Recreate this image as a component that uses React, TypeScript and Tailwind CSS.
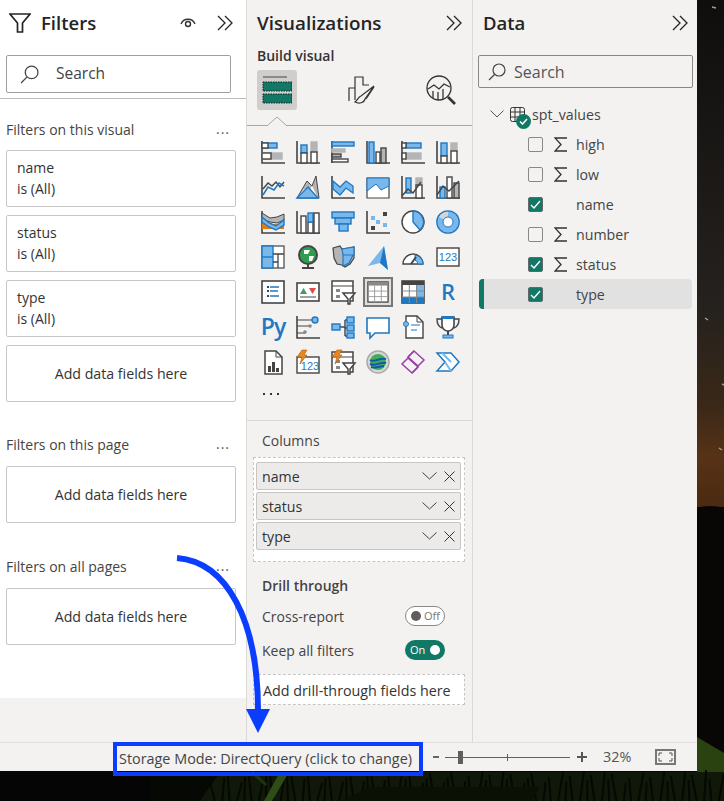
import type { ReactNode } from "react";

const D = "#444444";
const B = "#1f78c1";
const L = "#7ab8ec";
const G = "#b5b5b5";
const W = "#ffffff";
const P = "#9b3fa8";

type BoxProps = { x: number; y: number; w: number; h: number; f?: string; s?: string };

function Box({ x, y, w, h, f = W, s = D }: BoxProps) {
  return <rect x={x} y={y} width={w} height={h} fill={f} stroke={s} strokeWidth={1.4} />;
}

const axis = <path d="M1 1v22h23" fill="none" stroke={D} strokeWidth={1.6} />;

// the visual picker, left to right and top to bottom
const visuals: ReactNode[] = [
  <>{axis}<Box x={1} y={3} w={15} h={5} f={L} s={B} /><Box x={1} y={3} w={6} h={5} /><Box x={1} y={13} w={20} h={6} f={G} s={G} /><Box x={1} y={13} w={9} h={6} /></>,
  <>{axis}<Box x={5} y={5} w={6} h={8} f={L} s={B} /><Box x={5} y={13} w={6} h={10} /><Box x={15} y={2} w={6} h={10} f={G} s={G} /><Box x={15} y={12} w={6} h={11} /></>,
  <><path d="M1 1v22" stroke={D} strokeWidth={1.6} /><Box x={1} y={2} w={22} h={4} f={L} s={B} /><Box x={1} y={9} w={13} h={3} f={G} s={G} /><Box x={1} y={14} w={9} h={3} f={G} s={D} /><Box x={1} y={19} w={16} h={3} /></>,
  <>{axis}<Box x={3} y={2} w={5} h={21} f={L} s={B} /><Box x={10} y={12} w={4} h={11} /><Box x={15} y={8} w={5} h={15} f={G} s={D} /></>,
  <>{axis}<Box x={5} y={3} w={15} h={5} f={L} s={B} /><Box x={1} y={3} w={4} h={5} /><Box x={5} y={13} w={15} h={6} f={G} s={G} /><Box x={1} y={13} w={4} h={6} /></>,
  <>{axis}<Box x={5} y={3} w={6} h={13} f={L} s={B} /><Box x={5} y={16} w={6} h={7} /><Box x={15} y={3} w={6} h={8} f={G} s={G} /><Box x={15} y={11} w={6} h={12} /></>,
  <>{axis}<path d="M2 14l5-6 4 3 4-4 4 5 4-5" fill="none" stroke={D} strokeWidth={1.4} /><path d="M2 20l5-8 6 3 5-7 5 3" fill="none" stroke={B} strokeWidth={1.5} /></>,
  <><path d="M1 23L11 6l5 5 4-10 3 22z" fill={G} stroke={D} strokeWidth={1} /><path d="M1 23l7-9 5 3 3-6 6 12z" fill={W} /><path d="M1 23l11-11 10 11z" fill={L} stroke={B} strokeWidth={1.4} /></>,
  <>{axis}<path d="M2 6l7 6 6-6 7 5v7l-7-5-6 7-7-6z" fill={L} stroke={B} strokeWidth={1.3} /></>,
  <><path d="M1 3h22v20H1z" fill={W} stroke={D} strokeWidth={1.2} /><path d="M1 3h22v8l-8 4-5-6-9 7z" fill={L} stroke={B} strokeWidth={1} /></>,
  <>{axis}<Box x={5} y={3} w={5} h={15} f={L} s={B} /><Box x={15} y={3} w={6} h={7} f={G} s={G} /><Box x={15} y={10} w={6} h={13} /><path d="M1 21l6-7 5 4 8-11" fill="none" stroke={D} strokeWidth={1.4} /></>,
  <>{axis}<Box x={4} y={12} w={5} h={11} f={L} s={B} /><Box x={11} y={2} w={5} h={21} /><Box x={18} y={8} w={5} h={15} f={G} s={D} /><path d="M1 20l6-9 6 5 10-10" fill="none" stroke={D} strokeWidth={1.4} /></>,
  <>{axis}<path d="M1 3l8 5 7-1 7-3v6l-7 3-7-1-8-3z" fill={G} stroke={D} strokeWidth={1} /><path d="M1 14h22v5H1z" fill="#e07b1a" /><path d="M1 7l7 6 7 3 8-6v5l-8 5-7-3-7-5z" fill={L} stroke={B} strokeWidth={1.4} /></>,
  <>{axis}<Box x={5} y={6} w={5} h={17} /><Box x={12} y={12} w={5} h={11} f={W} /><Box x={12} y={3} w={5} h={9} f={L} s={B} /><Box x={18} y={3} w={5} h={20} f={W} /></>,
  <><Box x={1} y={2} w={22} h={6} f={L} s={B} /><Box x={4} y={8} w={16} h={6} f={L} s={B} /><Box x={8} y={14} w={9} h={7} f={L} s={B} /></>,
  <>{axis}<rect x={17} y={2} width={4} height={4} fill={D} /><rect x={5} y={6} width={4} height={4} fill={L} /><rect x={10} y={10} width={4} height={4} fill={L} /><rect x={17} y={13} width={4} height={4} fill={L} /><rect x={5} y={16} width={4} height={4} fill={D} /></>,
  <><circle cx={12} cy={12} r={11} fill={W} stroke={D} strokeWidth={1.4} /><path d="M12 12V1a11 11 0 0 1 7 19z" fill={L} stroke={B} strokeWidth={1.4} /></>,
  <><circle cx={12} cy={12} r={8} fill="none" stroke={L} strokeWidth={6} /><path d="M12 4a8 8 0 0 0-7 4" fill="none" stroke="#d5d5d5" strokeWidth={6} /><circle cx={12} cy={12} r={11.2} fill="none" stroke={B} strokeWidth={1.3} /><circle cx={12} cy={12} r={5} fill={W} stroke={B} strokeWidth={1} /></>,
  <><rect x={1} y={1} width={22} height={22} fill={W} stroke={D} strokeWidth={1.2} /><rect x={1} y={1} width={11} height={22} fill={L} stroke={B} strokeWidth={1.4} /><path d="M1 12h11" stroke={B} strokeWidth={1.4} /><path d="M12 9h11M17 9v14M12 17h5" stroke={D} strokeWidth={1.3} /></>,
  <><circle cx={12} cy={10} r={9} fill="#2f9e4f" stroke={D} strokeWidth={2} /><path d="M8 5h6l-2 4H8zM13 11h5l-2 5h-3z" fill={W} /><path d="M12 19v4M6 23h12" stroke={D} strokeWidth={2} /></>,
  <><path d="M2 3l7-2 2 3 6-1 6-1v11l-4 6-5 3-3-2-5-1-3-6z" fill={G} stroke={D} strokeWidth={1.2} /><path d="M11 4l6-1 6-1v8H12zM12 10h10l-4 8-6 3z" fill={L} stroke={B} strokeWidth={1.2} /></>,
  <><path d="M2 21L18 1l4 24-8-7z" fill={L} /><path d="M18 1l4 24-8-7z" fill={B} /></>,
  <><path d="M2 19a10 10 0 0 1 20 0z" fill={W} stroke={D} strokeWidth={1.4} /><path d="M14 10a9 9 0 0 1 8 9h-5a5 5 0 0 0-3-4z" fill={L} stroke={B} strokeWidth={1} /><path d="M10 19l5-7" stroke={D} strokeWidth={2} /></>,
  <><rect x={1} y={3} width={22} height={18} fill={W} stroke={D} strokeWidth={1.4} /><text x={12} y={16} textAnchor="middle" fontSize={11} fill={B} fontFamily="'Liberation Sans', sans-serif">123</text></>,
  <><rect x={1} y={1} width={22} height={22} fill={W} stroke={D} strokeWidth={1.6} /><rect x={6} y={6} width={2} height={2} fill={D} /><rect x={6} y={10} width={2} height={2} fill={D} /><rect x={6} y={15} width={2} height={2} fill={D} /><path d="M9 7h9M9 11h8M9 16h9" stroke={B} strokeWidth={1.6} /></>,
  <><rect x={1} y={3} width={22} height={18} fill={W} stroke={D} strokeWidth={1.6} /><path d="M4 14l3.500-6 3.500 6z" fill="#3f9e5f" /><path d="M13 8h7l-3.500 6z" fill="#e2494b" /><path d="M4 17h16" stroke={D} /></>,
  <><rect x={1} y={1} width={21} height={20} fill={W} stroke={D} strokeWidth={1.5} /><path d="M1 6h21" stroke={D} /><rect x={5} y={9} width={4} height={3} fill="#888" /><rect x={5} y={15} width={4} height={3} fill="#888" /><path d="M12 13h12l-5 6v5h-2v-5z" fill={W} stroke={D} strokeWidth={1.5} /></>,
  <><rect x={1} y={1} width={22} height={22} fill={W} stroke={D} strokeWidth={1.4} /><rect x={1} y={1} width={22} height={4} fill="#888" /><path d="M1 11h22M1 17h22M8.300 5v18M15.600 5v18" stroke="#999" /></>,
  <><rect x={1} y={1} width={22} height={22} fill={W} stroke={D} strokeWidth={1.6} /><rect x={1} y={1} width={22} height={4} fill={D} /><rect x={15} y={5} width={8} height={18} fill={L} /><rect x={1} y={17} width={22} height={6} fill={B} /><path d="M1 11h22M1 17h22M8.300 5v18M15.600 5v18" stroke="#888" /></>,
  <text x={12} y={20} textAnchor="middle" fontSize={22} fontWeight={600} fill={B} fontFamily="'Open Sans', sans-serif">R</text>,
  <text x={12} y={20} textAnchor="middle" fontSize={23} fontWeight={600} fill={B} fontFamily="'Open Sans', sans-serif" letterSpacing={-1}>Py</text>,
  <><path d="M1 1v22h23" fill="none" stroke={D} strokeWidth={1.6} /><path d="M1 5h16M1 11h12M1 18h8" stroke={D} strokeWidth={1.2} /><circle cx={19} cy={5} r={3} fill={L} stroke={B} strokeWidth={1.4} /><circle cx={14} cy={11} r={1.800} fill="#888" /><circle cx={9} cy={17} r={1.800} fill="#888" /></>,
  <><path d="M9 12h5M14 5v16M14 5h3M14 13h3M14 21h3" fill="none" stroke={D} strokeWidth={1.4} /><Box x={1} y={9} w={8} h={6} f={L} s={B} /><Box x={16} y={2} w={7} h={6} f={L} s={B} /><Box x={16} y={10} w={7} h={6} f={L} s={B} /><Box x={16} y={18} w={7} h={5} f={L} s={B} /></>,
  <path d="M1 3h22v15H9l-5 5v-5H1z" fill={W} stroke={B} strokeWidth={1.6} />,
  <><path d="M5 1h11l6 6v16H5z" fill={W} stroke={D} strokeWidth={1.4} /><path d="M16 1v6h6" fill="none" stroke={D} /><circle cx={5} cy={9} r={2.500} fill={L} stroke={B} /><path d="M10 10h9M10 15h6" stroke={B} strokeWidth={1.2} /></>,
  <><path d="M6 2h12v8a6 6 0 0 1-12 0z" fill={W} stroke={D} strokeWidth={1.6} /><rect x={6} y={1} width={12} height={3} fill={B} /><path d="M6 4H1c0 6 2 8 5 9M18 4h5c0 6-2 8-5 9" fill="none" stroke={D} strokeWidth={1.4} /><path d="M12 16v4" stroke={D} strokeWidth={2} /><rect x={7} y={20} width={10} height={3} fill={L} stroke={B} /></>,
  <><path d="M4 1h11l6 6v17H4z" fill={W} stroke={D} strokeWidth={1.5} /><path d="M15 1v6h6" fill="none" stroke={D} /><rect x={7} y={16} width={3} height={6} fill={D} /><rect x={11} y={12} width={3} height={10} fill={D} /><rect x={15} y={18} width={3} height={4} fill={D} /></>,
  <><rect x={1} y={7} width={22} height={16} fill={W} stroke={D} strokeWidth={1.4} /><text x={14} y={20} textAnchor="middle" fontSize={11} fill={B} fontFamily="'Liberation Sans', sans-serif">123</text><path d="M6 0h5L8 5h3l-7 9 2-7H1z" fill="#e8871e" stroke="#a85a10" strokeWidth={0.6} /></>,
  <><rect x={1} y={2} width={21} height={20} fill={W} stroke={D} strokeWidth={1.5} /><path d="M1 7h21" stroke={D} /><rect x={5} y={10} width={4} height={3} fill="#888" /><rect x={5} y={16} width={4} height={3} fill="#888" /><path d="M12 13h12l-5 6v5h-2v-5z" fill={W} stroke={D} strokeWidth={1.5} /><path d="M6 0h5L8 5h3l-7 9 2-7H1z" fill="#e8871e" stroke="#a85a10" strokeWidth={0.6} /></>,
  <><circle cx={12} cy={12} r={11} fill="#d8d8d8" stroke="#aaa" strokeWidth={1.5} /><circle cx={12} cy={12} r={8} fill="#3fae5a" /><path d="M4 10c5 3 10-3 16-1M4 14c6 3 11-3 16-1M5 17c5 2 9-1 13-1" fill="none" stroke="#1458a8" strokeWidth={2} /></>,
  <><path d="M13 1l10 9-6 6-10-9z" fill="none" stroke={P} strokeWidth={1.5} /><path d="M11 23L1 14l6-6 10 9z" fill="none" stroke={P} strokeWidth={1.5} /><path d="M7 7L13 1M17 17l-6 6" stroke={P} strokeWidth={1.5} /></>,
  <><path d="M1 3h14l8 9-8 9H1l8-9z" fill={W} stroke={B} strokeWidth={1.5} /><path d="M6 3l9 9M9 12l6 9" stroke={L} strokeWidth={2} /></>,
];

// dark blades of grass along the bottom of the wallpaper
const blades = Array.from({ length: 70 }, (_, i) => {
  const x = 215 + i * 7.300;
  const lean = (i * 7) % 11 - 5;
  return `M${x} 801l${lean} -${18 + (i * 5) % 14}`;
});

function FilterCard({ name }: { name: string }) {
  return (
    <div className="ml-[6px] mr-[10px] h-[57px] rounded-[2px] border border-[#c8c6c4] bg-white px-[10px] pt-[6px] text-[14px] leading-[21px] text-[#333]">
      <div>{name}</div>
      <div>is (All)</div>
    </div>
  );
}

function EmptyCard() {
  return (
    <div className="ml-[6px] mr-[10px] flex h-[57px] items-center justify-center rounded-[2px] border border-[#c8c6c4] bg-white text-[14.200px] text-[#333]">
      Add data fields here
    </div>
  );
}

function SectionLabel({ title, className }: { title: string; className: string }) {
  return (
    <div className={`flex items-center justify-between pl-[6px] pr-[16px] text-[14px] text-[#444] ${className}`}>
      <span>{title}</span>
      <span className="relative -top-[1px] tracking-[1px] text-[#555]">...</span>
    </div>
  );
}

function Chevrons({ className }: { className?: string }) {
  return (
    <svg viewBox="0 0 16 16" className={`h-[16px] w-[16px] ${className ?? ""}`} fill="none" stroke="#252423" strokeWidth={1.300}>
      <path d="M1 1l7 7-7 7M8 1l7 7-7 7" />
    </svg>
  );
}

function SearchIcon({ className }: { className?: string }) {
  return (
    <svg viewBox="0 0 18 18" className={className} fill="none" stroke="#444" strokeWidth={1.200}>
      <circle cx={11} cy={7} r={6} />
      <path d="M6.500 11.500L1 17" />
    </svg>
  );
}

function Well({ name }: { name: string }) {
  return (
    <div className="flex h-[28px] items-center rounded-[2px] border border-[#c8c6c4] bg-[#edebe9] pl-[5px] pr-[5px] text-[14.200px] text-[#333]">
      <span className="flex-1 pt-[2px]">{name}</span>
      <svg viewBox="0 0 15 8" className="mr-[7px] h-[8px] w-[15px]" fill="none" stroke="#444" strokeWidth={1}>
        <path d="M0.500 0.500L7.500 7l7-6.500" />
      </svg>
      <svg viewBox="0 0 11 11" className="h-[11px] w-[11px]" fill="none" stroke="#333" strokeWidth={1}>
        <path d="M0.500 0.500l10 10M10.500 0.500l-10 10" />
      </svg>
    </div>
  );
}

function Toggle({ on }: { on: boolean }) {
  if (on) {
    return (
      <div className="flex h-[20px] w-[40px] items-center rounded-full bg-[#117865] pl-[5px] text-[11px] text-white">
        <span className="flex-1">On</span>
        <span className="mr-[5px] h-[10px] w-[10px] rounded-full bg-white" />
      </div>
    );
  }
  return (
    <div className="flex h-[20px] w-[40px] items-center rounded-full border border-[#8a8886] bg-white pl-[5px] text-[11px] text-[#777]">
      <span className="mr-[3px] h-[10px] w-[10px] rounded-full bg-[#605e5c]" />
      <span>Off</span>
    </div>
  );
}

function Checkbox({ checked }: { checked: boolean }) {
  if (!checked) return <span className="h-[15px] w-[15px] rounded-[2px] border border-[#8a8886] bg-[#f3f2f1]" />;
  return (
    <span className="flex h-[15px] w-[15px] items-center justify-center rounded-[2px] border border-[#666] bg-[#117865]">
      <svg viewBox="0 0 11 9" className="h-[9px] w-[11px]" fill="none" stroke="#fff" strokeWidth={1.400}>
        <path d="M1 5l3 3 6-7" />
      </svg>
    </span>
  );
}

function Field({ name, checked, sigma, active }: { name: string; checked: boolean; sigma: boolean; active?: boolean }) {
  return (
    <div className={`relative flex h-[30px] items-center rounded-[4px] pl-[49px] text-[14.200px] text-[#444] ${active ? "bg-[#e1e1e1]" : ""}`}>
      {active && <span className="absolute bottom-0 left-0 top-0 w-[5px] rounded-l-[4px] bg-[#117865]" />}
      <Checkbox checked={checked} />
      <span className="flex w-[33px] justify-center pl-[1px]">
        {sigma && (
          <svg viewBox="0 0 13 15" className="h-[15px] w-[13px]" fill="none" stroke="#333" strokeWidth={1.300}>
            <path d="M13 1H1l6 6.500L1 14h12" />
          </svg>
        )}
      </span>
      <span className="pt-[2px]">{name}</span>
    </div>
  );
}

export default function App() {
  return (
    <div className="relative h-[801px] w-[724px] overflow-hidden bg-[#050505] font-['Open_Sans','Noto_Sans',sans-serif]">
      {/* desktop wallpaper behind the window */}
      <svg viewBox="0 0 724 801" className="absolute inset-0 h-[801px] w-[724px]">
        <defs>
          <linearGradient id="sky" x1="0" y1="0" x2="0" y2="1">
            <stop offset="0" stopColor="#100e0d" />
            <stop offset="0.6" stopColor="#24211e" />
            <stop offset="0.8" stopColor="#3a2818" />
            <stop offset="0.9" stopColor="#573216" />
            <stop offset="1" stopColor="#4a2a12" />
          </linearGradient>
        </defs>
        <rect x={690} y={0} width={34} height={507} fill="url(#sky)" />
        <path d="M690 510c12-5 24-5 34-2v270h-34z" fill="#090706" />
        <path d="M697 737l27 16v25h-27z" fill="#2a420f" />
        <path d="M712 7l4 1M705 318l3 2M722 384l2 1M719 448l3 2" stroke="#a09c94" strokeWidth={1.500} />
        <path d="M200 801V772h524v29z" fill="#10180a" />
        <path d="M150 801V772h70l-20 29z" fill="#060803" />
        <path d={blades.join("")} stroke="#060803" strokeWidth={2} />
        <path d="M340 801l30-14h170l-8 14z" fill="#0b1005" />
        <path d="M280 772h9l-17 29h-8z" fill="#2f4d17" />
        <path d="M252 772l14 13" stroke="#1f3310" strokeWidth={3} />
      </svg>

      <div className="relative flex h-[771px] w-[697px] flex-col bg-[#f3f2f1]">
        <div className="flex h-[742px]">
          {/* Filters */}
          <div className="flex w-[247px] flex-col border-r border-[#dcdad8]">
            <div className="h-[698px] bg-white">
              <div className="flex h-[46px] items-center pl-[9px] pr-[13px]">
                <svg viewBox="0 0 22 22" className="mr-[10px] h-[22px] w-[22px]" fill="none" stroke="#252423" strokeWidth={1.700}>
                  <path d="M1 2h20l-7.500 9v9h-5v-9z" />
                </svg>
                <span className="flex-1 text-[18.500px] font-semibold text-[#252423]">Filters</span>
                <svg viewBox="0 0 16 12" className="mr-[21px] h-[12px] w-[16px]" fill="none" stroke="#333" strokeWidth={1.400}>
                  <path d="M1 7a7.500 7.500 0 0 1 14 0" />
                  <circle cx={8} cy={7} r={2.500} />
                </svg>
                <Chevrons />
              </div>
              <div className="ml-[6px] mr-[15px] mt-[9px] flex h-[38px] items-center rounded-[2px] border border-[#a19f9d] pl-[13px] text-[15.500px] text-[#444]">
                <SearchIcon className="mr-[17px] h-[19px] w-[19px]" />
                Search
              </div>
              <div className="mt-[5px] h-px bg-[#bdbbb9]" />
              <SectionLabel title="Filters on this visual" className="mb-[10px] mt-[20px] h-[21px]" />
              <div className="flex flex-col gap-[8px]">
                <FilterCard name="name" />
                <FilterCard name="status" />
                <FilterCard name="type" />
                <EmptyCard />
              </div>
              <SectionLabel title="Filters on this page" className="mb-[11px] mt-[32px] h-[21px]" />
              <EmptyCard />
              <SectionLabel title="Filters on all pages" className="mb-[11px] mt-[33px] h-[21px]" />
              <EmptyCard />
            </div>
          </div>

          {/* Visualizations */}
          <div className="flex w-[226px] flex-col border-r border-[#dcdad8]">
            <div className="flex h-[46px] items-center pl-[10px] pr-[10px]">
              <span className="flex-1 text-[18.800px] font-semibold text-[#252423]">Visualizations</span>
              <Chevrons />
            </div>
            <div className="pl-[10px] text-[14px] font-semibold leading-[20px] text-[#333]">Build visual</div>
            <div className="mt-[4px] flex items-center pl-[10px]">
              <div className="flex h-[40px] w-[40px] flex-col items-center justify-center rounded-[3px] bg-[#cfcecd]">
                <svg viewBox="0 0 30 30" className="h-[30px] w-[30px]">
                  <path d="M1 2h24" stroke="#444" strokeWidth={1} />
                  <rect x={1} y={7} width={29} height={9} fill="#117865" stroke="#222" strokeWidth={1} strokeDasharray="1.500 1" />
                  <rect x={1} y={19} width={29} height={9} fill="#117865" stroke="#222" strokeWidth={1} strokeDasharray="1.500 1" />
                </svg>
              </div>
              <svg viewBox="0 0 28 30" className="ml-[51px] h-[30px] w-[28px]" fill="none" stroke="#333" strokeWidth={1.200}>
                <path d="M1 26V13h6V2h8v8h6M7 13v12" />
                <path d="M26 11L13 21c-3 1-3 4-6 6 4 2 9 1 10-3z" />
                <path d="M26 12l-8 12" />
              </svg>
              <svg viewBox="0 0 32 32" className="ml-[49px] h-[32px] w-[32px]" fill="none" stroke="#333" strokeWidth={1.300}>
                <circle cx={14} cy={14} r={12} />
                <path d="M3 15l6-4 5 4 5-5 6 3M8 17v7M13 18v8M18 15v10" />
                <path d="M23 23l7 7" strokeWidth={2.600} />
              </svg>
            </div>
            <div className="relative mt-[15px] h-px bg-[#a6a6a6]">
              <svg viewBox="0 0 22 10" className="absolute left-[19px] top-[-9px] h-[10px] w-[22px]" fill="#f3f2f1" stroke="#a6a6a6">
                <path d="M1 10l10-9 10 9" />
              </svg>
            </div>
            <div className="ml-[8px] mt-[8px] grid w-[210px] grid-cols-6 self-start">
              {visuals.map((icon, i) => (
                <div key={i} className="flex h-[35px] w-[35px] items-center justify-center">
                  <div className={i === 27 ? "flex h-[30px] w-[30px] items-center justify-center border-2 border-[#777] bg-[#e1dfdd]" : ""}>
                    <svg viewBox="0 0 24 24" className={i === 27 ? "h-[22px] w-[22px]" : "h-[24px] w-[24px] overflow-visible"}>{icon}</svg>
                  </div>
                </div>
              ))}
            </div>
            <div className="ml-[16px] flex h-[31px] items-start gap-[5px] pt-[14px]">
              <span className="h-[2px] w-[2px] bg-[#333]" />
              <span className="h-[2px] w-[2px] bg-[#333]" />
              <span className="h-[2px] w-[2px] bg-[#333]" />
            </div>
            <div className="mt-[10px] h-px bg-[#d9d7d5]" />
            <div className="mt-[10px] pl-[15px] text-[14px] leading-[20px] text-[#444]">Columns</div>
            <div className="ml-[6px] mr-[7px] mt-[6px] flex h-[105px] flex-col gap-[2px] border border-dashed border-[#c8c6c4] bg-white pl-[2px] pr-[3px] pt-[4px]">
              <Well name="name" />
              <Well name="status" />
              <Well name="type" />
            </div>
            <div className="mt-[14px] pl-[15px] text-[14px] font-semibold leading-[20px] text-[#444]">Drill through</div>
            <div className="mt-[10px] flex h-[20px] items-center pl-[15px] pr-[27px] text-[14px] text-[#444]">
              <span className="flex-1">Cross-report</span>
              <Toggle on={false} />
            </div>
            <div className="mt-[14px] flex h-[20px] items-center pl-[15px] pr-[27px] text-[14px] text-[#444]">
              <span className="flex-1">Keep all filters</span>
              <Toggle on />
            </div>
            <div className="ml-[6px] mr-[7px] mt-[14px] flex h-[31px] items-center border border-dashed border-[#c8c6c4] bg-white pl-[9px] pt-[2px] text-[14.300px] text-[#333]">
              Add drill-through fields here
            </div>
          </div>

          {/* Data */}
          <div className="flex w-[224px] flex-col">
            <div className="flex h-[46px] items-center pl-[10px] pr-[9px]">
              <span className="flex-1 text-[18.500px] font-semibold text-[#252423]">Data</span>
              <Chevrons />
            </div>
            <div className="ml-[5px] mr-[4px] mt-[9px] flex h-[33px] items-center rounded-[2px] border border-[#8a8886] pl-[9px] pt-[1px] text-[16px] text-[#555]">
              <SearchIcon className="mr-[8px] h-[18px] w-[18px]" />
              Search
            </div>
            <div className="ml-[6px] mr-[5px] mt-[11px]">
              <div className="flex h-[30px] items-center pl-[11px] text-[14.200px] text-[#444]">
                <svg viewBox="0 0 14 8" className="mr-[6px] h-[8px] w-[14px]" fill="none" stroke="#555" strokeWidth={1}>
                  <path d="M0.500 0.500L7 7l6.500-6.500" />
                </svg>
                <span className="relative mr-[7px] h-[15px] w-[15px]">
                  <svg viewBox="0 0 15 15" className="h-[15px] w-[15px]" fill="none" stroke="#333" strokeWidth={1}>
                    <rect x={0.500} y={0.500} width={14} height={14} rx={2} />
                    <path d="M5 0.500v14M10 0.500v14M0.500 5h14M0.500 10h14" />
                  </svg>
                  <span className="absolute left-[6px] top-[7px] flex h-[15px] w-[15px] items-center justify-center rounded-full bg-[#117865]">
                    <svg viewBox="0 0 9 7" className="h-[7px] w-[9px]" fill="none" stroke="#fff" strokeWidth={1.500}>
                      <path d="M1 3.500L3.500 6 8 1" />
                    </svg>
                  </span>
                </span>
                <span className="pt-[2px]">spt_values</span>
              </div>
              <Field name="high" checked={false} sigma />
              <Field name="low" checked={false} sigma />
              <Field name="name" checked sigma={false} />
              <Field name="number" checked={false} sigma />
              <Field name="status" checked sigma />
              <Field name="type" checked sigma={false} active />
            </div>
          </div>
        </div>

        {/* status bar */}
        <div className="flex h-[29px] items-center border-t border-[#e1dfdd] text-[14.400px] text-[#555]">
          <span className="ml-[119px] w-[310px] whitespace-nowrap pt-[3px] text-[#444]">Storage Mode: DirectQuery (click to change)</span>
          <span className="ml-[4px] h-[2px] w-[6px] bg-[#666]" />
          <span className="relative ml-[6px] h-px w-[125px] bg-[#605e5c]">
            <span className="absolute left-[13px] top-[-6px] h-[13px] w-[5px] bg-[#605e5c]" />
            <span className="absolute left-[62px] top-[-3px] h-[7px] w-px bg-[#605e5c]" />
          </span>
          <svg viewBox="0 0 10 10" className="ml-[7px] h-[10px] w-[10px]" stroke="#555" strokeWidth={2}>
            <path d="M0 5h10M5 0v10" />
          </svg>
          <span className="ml-[16px] w-[30px] whitespace-nowrap">32%</span>
          <svg viewBox="0 0 21 16" className="ml-[22px] h-[16px] w-[21px]" fill="none" stroke="#777">
            <rect x={1} y={1} width={19} height={14} strokeWidth={2} />
            <path d="M4 7V4h3M14 4h3v3M4 9v3h3M14 12h3V9" stroke="#555" strokeWidth={1} />
          </svg>
        </div>
      </div>

      {/* annotation drawn over the screenshot */}
      <svg viewBox="0 0 724 801" className="pointer-events-none absolute inset-0 h-[801px] w-[724px]" fill="none">
        <path d="M177 558c50 4 81 62 81 153" stroke="#0b3dff" strokeWidth={6} />
        <path d="M246 709h24l-12 24z" fill="#0b3dff" />
      </svg>
      <div className="pointer-events-none absolute left-[113px] top-[742px] h-[34px] w-[310px] border-[4px] border-[#0b3dff]" />
    </div>
  );
}
